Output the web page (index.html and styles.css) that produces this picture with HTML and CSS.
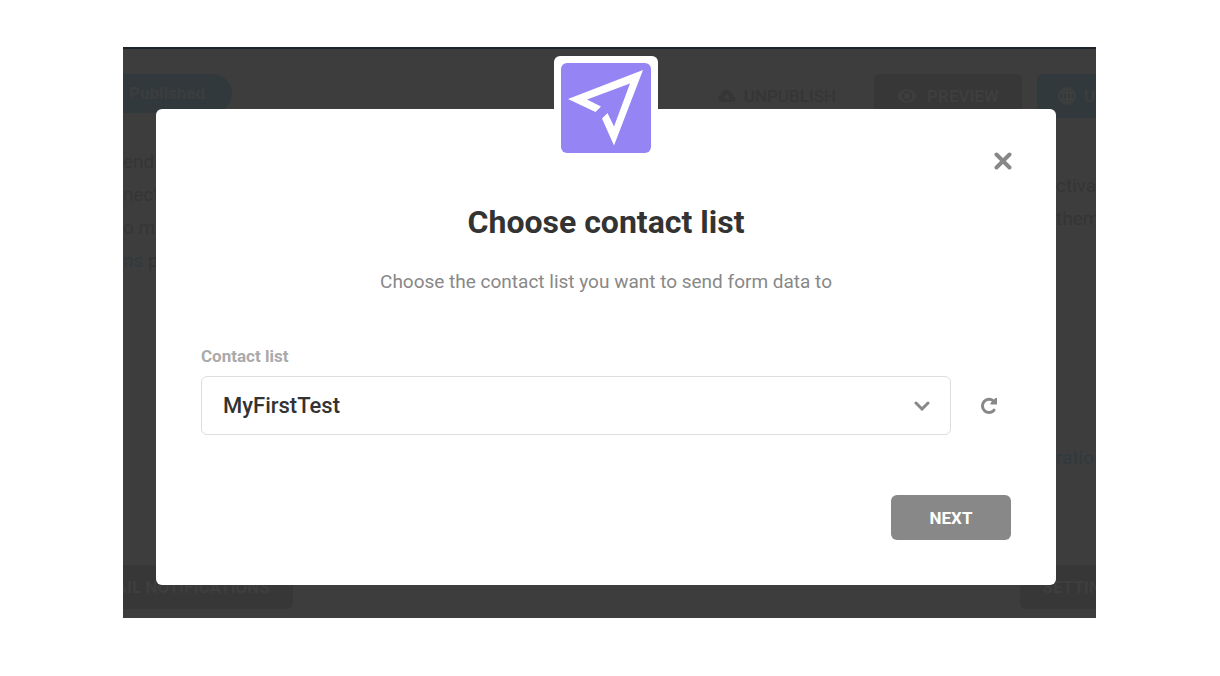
FILE: index.html
```html
<!DOCTYPE html>
<html lang="en">
<head>
    <meta charset="UTF-8">
    <meta name="viewport" content="width=device-width, initial-scale=1.0">
    <title>Choose contact list</title>
    <link rel="stylesheet" href="styles.css">
</head>
<body>

    <div class="stage">
        <!-- Dimmed page behind the popup -->
        <div class="page" aria-hidden="true">
            <div class="toolbar">
                <span class="status">Published</span>
                <div class="actions">
                    <button class="page-btn plain" tabindex="-1">
                        <svg width="18" height="12" viewBox="0 0 18 12">
                            <path fill="currentColor" fill-rule="evenodd" d="M4 12a4 4 0 0 1-1-7.800A5 5 0 0 1 12 2a3.500 3.500 0 0 1 3 4 3 3 0 0 1-1 6zM9 3.500l-1 2.200-2.500.3 1.800 1.600L7 10l2-1.200L11 10l-.4-2.400 1.900-1.600-2.500-.3z"/>
                        </svg>
                        UNPUBLISH
                    </button>
                    <button class="page-btn" tabindex="-1">
                        <svg width="20" height="14" viewBox="0 0 20 14">
                            <path fill="currentColor" fill-rule="evenodd" d="M0 7C4-2 16-2 20 7 16 16 4 16 0 7zm10-5a5 5 0 1 0 0 10 5 5 0 0 0 0-10z"/>
                            <circle cx="10" cy="7" r="3" fill="currentColor"/>
                        </svg>
                        PREVIEW
                    </button>
                    <button class="page-btn blue" tabindex="-1">
                        <svg width="20" height="20" viewBox="0 0 20 20" fill="none" stroke="currentColor" stroke-width="2">
                            <circle cx="10" cy="10" r="8"/>
                            <ellipse cx="10" cy="10" rx="4" ry="8"/>
                            <path d="M10 2v16M2 7h16M2 13h16"/>
                        </svg>
                        UPDATE
                    </button>
                </div>
            </div>

            <div class="columns">
                <p>end<br>nect<br>o mo<br><a href="#" tabindex="-1">ns</a> p</p>
                <div class="side">
                    <p>ctivat<br>them</p>
                    <a href="#" tabindex="-1">ration</a>
                </div>
            </div>

            <div class="footer">
                <button class="page-btn" tabindex="-1">EMAIL NOTIFICATIONS</button>
                <button class="page-btn" tabindex="-1">SETTINGS</button>
            </div>
        </div>

        <!-- Popup -->
        <div class="overlay">
            <form class="modal" role="dialog" aria-labelledby="modal-title">
                <div class="logo">
                    <svg width="90" height="90" viewBox="0 0 90 90">
                        <rect width="90" height="90" rx="6" fill="#9585f4"/>
                        <path fill="#fff" d="M82 7L53 82.500 41 55.500l5.500-5.500L53 63.500 69 20.500 26 36.500l14 7-5.500 5.500L7 36z"/>
                    </svg>
                </div>

                <button type="button" class="icon-btn close" aria-label="Close">
                    <svg width="18" height="18" viewBox="0 0 18 18">
                        <path d="M2.500 2.500l13 13M15.500 2.500l-13 13" stroke="currentColor" stroke-width="4" stroke-linecap="round"/>
                    </svg>
                </button>

                <h1 id="modal-title">Choose contact list</h1>
                <p class="subtitle">Choose the contact list you want to send form data to</p>

                <label for="contact-list">Contact list</label>
                <div class="field">
                    <div class="select">
                        <select id="contact-list">
                            <option>MyFirstTest</option>
                        </select>
                        <svg width="16" height="10" viewBox="0 0 16 10">
                            <path d="M2 2l6 6 6-6" fill="none" stroke="currentColor" stroke-width="3" stroke-linecap="round"/>
                        </svg>
                    </div>
                    <button type="button" class="icon-btn" aria-label="Refresh">
                        <svg width="18" height="18" viewBox="0 0 18 18">
                            <path d="M13.500 4A6.600 6.600 0 1 0 14 13.200" fill="none" stroke="currentColor" stroke-width="3" stroke-linecap="round"/>
                            <path d="M17 1v6.500h-6.500V6L15.500 1z" fill="currentColor"/>
                        </svg>
                    </button>
                </div>

                <button type="button" class="btn">NEXT</button>
            </form>
        </div>
    </div>

</body>
</html>
```
FILE: styles.css
```css
* {
    box-sizing: border-box;
}

body {
    margin: 0;
    background-color: #fff;
    font-family: Roboto, "Liberation Sans", sans-serif;
}

h1, p {
    margin: 0;
}

button {
    border: none;
    font-family: inherit;
    cursor: pointer;
}

.stage {
    position: relative;
    margin: 47px 124px 58px 123px;
    border-top: 2px solid #1e242b;
    background-color: #3d3d3d;
    overflow: hidden;
}

/* Dimmed page */
.page {
    display: flex;
    flex-direction: column;
    color: #353535;
    font-size: 19px;
    line-height: 33px;
    white-space: nowrap;
}

.page a {
    color: #31393d;
    text-decoration: none;
}

.toolbar {
    display: flex;
    justify-content: space-between;
    margin-right: -80px;
    padding-top: 25px;
}

.status {
    height: 39px;
    padding: 0 27px 0 6px;
    border-radius: 0 20px 20px 0;
    background-color: #31393d;
    color: #3d3d3d;
    font-size: 17px;
    font-weight: 700;
    line-height: 38px;
}

.actions {
    display: flex;
    gap: 15px;
}

.page-btn {
    display: flex;
    align-items: center;
    gap: 10px;
    height: 44px;
    padding: 0 23px;
    border-radius: 6px;
    background-color: #373737;
    color: #3e3e3e;
    font-size: 17px;
    font-weight: 700;
}

.page-btn.plain {
    gap: 8px;
    background: none;
    color: #363636;
    font-weight: 500;
}

.page-btn.blue {
    width: 139px;
    padding: 0 20px;
    gap: 7px;
    background-color: #31393d;
}

.columns {
    display: flex;
    justify-content: space-between;
    height: 447px;
    padding-top: 27px;
}

.side {
    display: flex;
    flex-direction: column;
    gap: 206px;
    width: 40px;
    padding-top: 24px;
}

.footer {
    display: flex;
    justify-content: space-between;
    margin: 0 -50px 9px -55px;
}

/* Popup */
.overlay {
    position: absolute;
    inset: 0;
    padding: 60px 40px 33px 33px;
}

.modal {
    position: relative;
    display: flex;
    flex-direction: column;
    padding: 93px 45px 45px;
    border-radius: 6px;
    background-color: #fff;
}

.logo {
    position: absolute;
    top: -53px;
    left: 50%;
    height: 104px;
    padding: 7px;
    border-radius: 6px;
    background-color: #fff;
    transform: translateX(-50%);
}

.icon-btn {
    display: flex;
    padding: 0;
    background: none;
    color: #888;
}

.close {
    position: absolute;
    top: 43px;
    right: 44px;
}

.modal h1 {
    margin-bottom: 28px;
    color: #333;
    font-size: 32px;
    font-weight: 700;
    line-height: 40px;
    text-align: center;
}

.subtitle {
    margin-bottom: 52px;
    color: #888;
    font-size: 19px;
    line-height: 24px;
    text-align: center;
}

.modal label {
    margin-bottom: 10px;
    color: #aaa;
    font-size: 17px;
    font-weight: 700;
    line-height: 20px;
}

.field {
    display: flex;
    align-items: center;
    gap: 29px;
    margin-bottom: 60px;
    padding-right: 13px;
}

.select {
    position: relative;
    flex: 1;
    color: #888;
}

.select select {
    display: block;
    width: 100%;
    height: 59px;
    padding: 0 50px 0 21px;
    border: 1px solid #ddd;
    border-radius: 6px;
    background-color: #fff;
    color: #333;
    font-family: inherit;
    font-size: 22px;
    font-weight: 500;
    appearance: none;
}

.select svg {
    position: absolute;
    top: 25px;
    right: 21px;
    pointer-events: none;
}

.btn {
    align-self: flex-end;
    width: 120px;
    height: 45px;
    border-radius: 6px;
    background-color: #888;
    color: #fff;
    font-size: 17px;
    font-weight: 700;
}

.btn:hover {
    background-color: #777;
}
```
